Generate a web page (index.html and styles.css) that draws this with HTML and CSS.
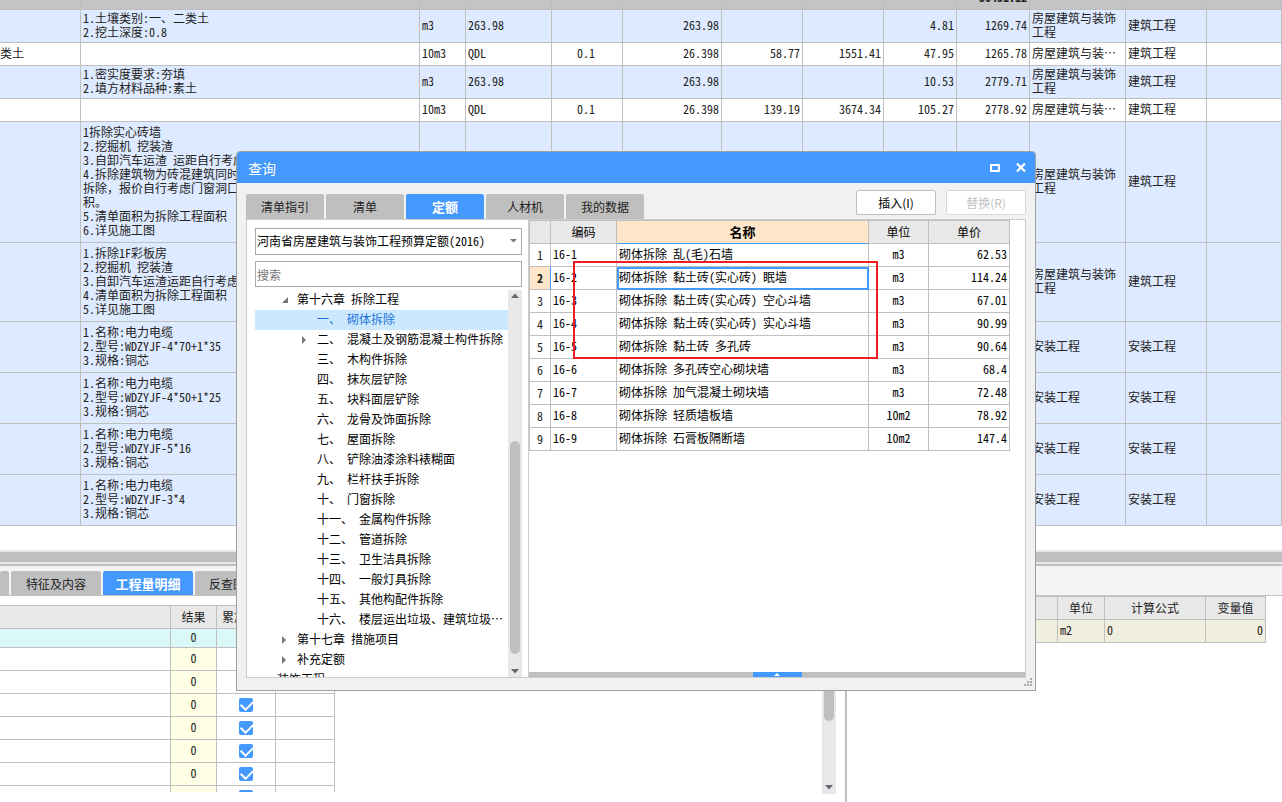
FILE: index.html
```html
<!DOCTYPE html>
<html lang="zh-CN">
<head>
<meta charset="utf-8">
<title>查询</title>
<link rel="stylesheet" href="styles.css">
</head>
<body>
<main class="workspace">
  <section class="bill">
    <table class="grid bill-table">
      <colgroup><col class="w81"><col class="w339"><col class="w46"><col class="w86"><col class="w71"><col class="w99"><col class="w81"><col class="w81"><col class="w73"><col class="w73"><col class="w96"><col class="w81"><col></colgroup>
      <thead>
        <tr><th></th><th></th><th></th><th></th><th></th><th></th><th></th><th></th><th></th><th><div class="total">30431.12</div></th><th></th><th></th><th></th></tr>
      </thead>
      <tbody>
        <tr class="item h33"><td></td><td>1.土壤类别:一、二类土<br>2.挖土深度:0.8</td><td>m3</td><td>263.98</td><td></td><td class="num">263.98</td><td></td><td></td><td class="num">4.81</td><td class="num">1269.74</td><td>房屋建筑与装饰<br>工程</td><td>建筑工程</td><td></td></tr>
        <tr class="h23"><td class="flush">类土</td><td></td><td>10m3</td><td>QDL</td><td class="mid">0.1</td><td class="num">26.398</td><td class="num">58.77</td><td class="num">1551.41</td><td class="num">47.95</td><td class="num">1265.78</td><td>房屋建筑与装…</td><td>建筑工程</td><td></td></tr>
        <tr class="item h33"><td></td><td>1.密实度要求:夯填<br>2.填方材料品种:素土</td><td>m3</td><td>263.98</td><td></td><td class="num">263.98</td><td></td><td></td><td class="num">10.53</td><td class="num">2779.71</td><td>房屋建筑与装饰<br>工程</td><td>建筑工程</td><td></td></tr>
        <tr class="h23"><td></td><td></td><td>10m3</td><td>QDL</td><td class="mid">0.1</td><td class="num">26.398</td><td class="num">139.19</td><td class="num">3674.34</td><td class="num">105.27</td><td class="num">2778.92</td><td>房屋建筑与装…</td><td>建筑工程</td><td></td></tr>
        <tr class="item h121"><td></td><td>1拆除实心砖墙<br>2.挖掘机 挖装渣<br>3.自卸汽车运渣 运距自行考虑<br>4.拆除建筑物为砖混建筑同时<br>拆除<span class="full">，</span>报价自行考虑门窗洞口<br>积。<br>5.清单面积为拆除工程面积<br>6.详见施工图</td><td></td><td></td><td></td><td></td><td></td><td></td><td></td><td></td><td>房屋建筑与装饰<br>工程</td><td>建筑工程</td><td></td></tr>
        <tr class="item h79"><td></td><td>1.拆除1F彩板房<br>2.挖掘机 挖装渣<br>3.自卸汽车运渣运距自行考虑<br>4.清单面积为拆除工程面积<br>5.详见施工图</td><td></td><td></td><td></td><td></td><td></td><td></td><td></td><td></td><td>房屋建筑与装饰<br>工程</td><td>建筑工程</td><td></td></tr>
        <tr class="item h51"><td></td><td>1.名称:电力电缆<br>2.型号:WDZYJF-4*70+1*35<br>3.规格:铜芯</td><td></td><td></td><td></td><td></td><td></td><td></td><td></td><td></td><td>安装工程</td><td>安装工程</td><td></td></tr>
        <tr class="item h51"><td></td><td>1.名称:电力电缆<br>2.型号:WDZYJF-4*50+1*25<br>3.规格:铜芯</td><td></td><td></td><td></td><td></td><td></td><td></td><td></td><td></td><td>安装工程</td><td>安装工程</td><td></td></tr>
        <tr class="item h51"><td></td><td>1.名称:电力电缆<br>2.型号:WDZYJF-5*16<br>3.规格:铜芯</td><td></td><td></td><td></td><td></td><td></td><td></td><td></td><td></td><td>安装工程</td><td>安装工程</td><td></td></tr>
        <tr class="item h51"><td></td><td>1.名称:电力电缆<br>2.型号:WDZYJF-3*4<br>3.规格:铜芯</td><td></td><td></td><td></td><td></td><td></td><td></td><td></td><td></td><td>安装工程</td><td>安装工程</td><td></td></tr>
      </tbody>
    </table>
  </section>
  <div class="split-h"></div>
  <section class="detail">
    <nav class="detail-tabs">
      <button class="tab stub" aria-label="上一页"></button>
      <button class="tab">特征及内容</button>
      <button class="tab active">工程量明细</button>
      <button class="tab fit">反查图形</button>
    </nav>
    <div class="panes">
      <div class="pane-left">
        <div class="quantity">
          <table class="grid boxed quantity-table">
            <colgroup><col class="w171"><col class="w46"><col class="w59"><col class="w59"></colgroup>
            <thead><tr class="h23"><th></th><th>结果</th><th>累加标识</th><th></th></tr></thead>
            <tbody>
              <tr class="sum h19"><td></td><td>0</td><td></td><td></td></tr>
              <tr class="h23"><td></td><td>0</td><td><input type="checkbox" aria-label="累加" checked></td><td></td></tr>
              <tr class="h23"><td></td><td>0</td><td><input type="checkbox" aria-label="累加" checked></td><td></td></tr>
              <tr class="h23"><td></td><td>0</td><td><input type="checkbox" aria-label="累加" checked></td><td></td></tr>
              <tr class="h23"><td></td><td>0</td><td><input type="checkbox" aria-label="累加" checked></td><td></td></tr>
              <tr class="h23"><td></td><td>0</td><td><input type="checkbox" aria-label="累加" checked></td><td></td></tr>
              <tr class="h23"><td></td><td>0</td><td><input type="checkbox" aria-label="累加" checked></td><td></td></tr>
              <tr class="h23"><td></td><td></td><td><input type="checkbox" aria-label="累加" checked></td><td></td></tr>
            </tbody>
          </table>
        </div>
        <div class="scrollbar pane-scroll">
          <div class="thumb"></div>
          <svg width="10" height="5" viewBox="0 0 10 5"><path d="M1 0h8L5 4.500z" fill="#666670"/></svg>
        </div>
      </div>
      <div class="pane-right">
        <table class="grid boxed variable-table">
          <colgroup><col class="w211"><col class="w47"><col class="w101"><col class="w60"></colgroup>
          <thead><tr class="h23"><th></th><th>单位</th><th>计算公式</th><th>变量值</th></tr></thead>
          <tbody><tr class="h23"><td></td><td>m2</td><td>0</td><td class="num">0</td></tr></tbody>
        </table>
      </div>
    </div>
  </section>
</main>

<div class="dialog" role="dialog" aria-labelledby="dialog-title">
  <header class="titlebar">
    <h1 id="dialog-title">查询</h1>
    <button aria-label="最大化"><svg width="12" height="10" viewBox="0 0 12 10"><path d="M2 2h8v6H2z" fill="none" stroke="#fff" stroke-width="2"/></svg></button>
    <button aria-label="关闭"><svg width="12" height="10" viewBox="0 0 12 10"><path d="M2 .5l8 8M10 .5l-8 8" fill="none" stroke="#fff" stroke-width="2.200"/></svg></button>
  </header>
  <div class="toolbar">
    <nav class="tabs">
      <button class="tab">清单指引</button>
      <button class="tab">清单</button>
      <button class="tab active">定额</button>
      <button class="tab">人材机</button>
      <button class="tab">我的数据</button>
    </nav>
    <div class="actions">
      <button class="action">插入(I)</button>
      <button class="action" disabled>替换(R)</button>
    </div>
  </div>
  <div class="body">
    <aside class="side">
      <div class="combo">
        <select aria-label="定额库"><option>河南省房屋建筑与装饰工程预算定额(2016)</option></select>
        <svg width="7" height="4" viewBox="0 0 7 4"><path d="M0 0h7L3.500 3.500z" fill="#777"/></svg>
      </div>
      <input class="search" type="text" placeholder="搜索" aria-label="搜索">
      <div class="tree-wrap">
        <ul class="tree">
          <li class="l2"><svg width="8" height="8" viewBox="0 0 8 8"><path d="M7 1v6H1z" fill="#777"/></svg>第十六章 拆除工程</li>
          <li class="l3 selected">一、 砌体拆除</li>
          <li class="l3"><svg width="8" height="8" viewBox="0 0 8 8"><path d="M1 0v8l4-4z" fill="#777"/></svg>二、 混凝土及钢筋混凝土构件拆除</li>
          <li class="l3">三、 木构件拆除</li>
          <li class="l3">四、 抹灰层铲除</li>
          <li class="l3">五、 块料面层铲除</li>
          <li class="l3">六、 龙骨及饰面拆除</li>
          <li class="l3">七、 屋面拆除</li>
          <li class="l3">八、 铲除油漆涂料裱糊面</li>
          <li class="l3">九、 栏杆扶手拆除</li>
          <li class="l3">十、 门窗拆除</li>
          <li class="l3">十一、 金属构件拆除</li>
          <li class="l3">十二、 管道拆除</li>
          <li class="l3">十三、 卫生洁具拆除</li>
          <li class="l3">十四、 一般灯具拆除</li>
          <li class="l3">十五、 其他构配件拆除</li>
          <li class="l3">十六、 楼层运出垃圾、建筑垃圾…</li>
          <li class="l2"><svg width="8" height="8" viewBox="0 0 8 8"><path d="M1 0v8l4-4z" fill="#777"/></svg>第十七章 措施项目</li>
          <li class="l2"><svg width="8" height="8" viewBox="0 0 8 8"><path d="M1 0v8l4-4z" fill="#777"/></svg>补充定额</li>
          <li class="l1">装饰工程</li>
        </ul>
        <div class="scrollbar tree-scroll">
          <svg width="10" height="5" viewBox="0 0 10 5"><path d="M1 5h8L5 .5z" fill="#666670"/></svg>
          <div class="thumb"></div>
          <svg width="10" height="5" viewBox="0 0 10 5"><path d="M1 0h8L5 4.500z" fill="#666670"/></svg>
        </div>
      </div>
    </aside>
    <section class="results">
      <table class="grid boxed quota">
        <colgroup><col class="w21"><col class="w66"><col class="w252"><col class="w60"><col class="w81"></colgroup>
        <thead><tr><th></th><th>编码</th><th class="current">名称</th><th>单位</th><th>单价</th></tr></thead>
        <tbody>
          <tr><th>1</th><td>16-1</td><td>砌体拆除 乱(毛)石墙</td><td>m3</td><td>62.53</td></tr>
          <tr class="picked"><th>2</th><td>16-2</td><td>砌体拆除 黏土砖(实心砖) 眠墙</td><td>m3</td><td>114.24</td></tr>
          <tr><th>3</th><td>16-3</td><td>砌体拆除 黏土砖(实心砖) 空心斗墙</td><td>m3</td><td>67.01</td></tr>
          <tr><th>4</th><td>16-4</td><td>砌体拆除 黏土砖(实心砖) 实心斗墙</td><td>m3</td><td>90.99</td></tr>
          <tr><th>5</th><td>16-5</td><td>砌体拆除 黏土砖 多孔砖</td><td>m3</td><td>90.64</td></tr>
          <tr><th>6</th><td>16-6</td><td>砌体拆除 多孔砖空心砌块墙</td><td>m3</td><td>68.4</td></tr>
          <tr><th>7</th><td>16-7</td><td>砌体拆除 加气混凝土砌块墙</td><td>m3</td><td>72.48</td></tr>
          <tr><th>8</th><td>16-8</td><td>砌体拆除 轻质墙板墙</td><td>10m2</td><td>78.92</td></tr>
          <tr><th>9</th><td>16-9</td><td>砌体拆除 石膏板隔断墙</td><td>10m2</td><td>147.4</td></tr>
        </tbody>
      </table>
      <div class="marker"></div>
      <div class="expander"><button aria-label="展开"><svg width="6" height="3" viewBox="0 0 6 3"><path d="M0 3h6L3 0z" fill="#fff"/></svg></button></div>
    </section>
  </div>
  <svg class="grip" width="8" height="8" viewBox="0 0 8 8" fill="#aaa"><path d="M6 0h2v2H6zM3 3h2v2H3zM6 3h2v2H6zM0 6h2v2H0zM3 6h2v2H3zM6 6h2v2H6z"/></svg>
</div>
</body>
</html>
```
FILE: styles.css
```css
* { box-sizing: border-box; }

html, body { height: 100%; margin: 0; }

body {
  overflow: hidden;
  background: #fff;
  color: #222;
  font: 12px/14px "Noto Sans CJK SC", sans-serif;
  font-feature-settings: "hwid";
}

button, input, select {
  margin: 0;
  padding: 0;
  border: 0;
  color: inherit;
  font: inherit;
  font-feature-settings: inherit;
}

svg { display: block; flex: none; }
.full { font-feature-settings: normal; }

/* shared grid tables */
.grid { table-layout: fixed; border-collapse: separate; border-spacing: 0; }
.grid th, .grid td {
  padding: 0 2px 2px;
  overflow: hidden;
  border: 0 solid #bfbfbf;
  border-width: 0 1px 1px 0;
  font-weight: 400;
  text-align: left;
  white-space: nowrap;
}
.grid thead th { padding: 0; background: #e8e8e8; text-align: center; }
.grid .num { text-align: right; }
.grid .mid { padding-left: 0; text-align: center; }
.grid .flush { padding-left: 0; }
.boxed { border-top: 1px solid #bfbfbf; }

.w21 { width: 21px; }
.w46 { width: 46px; }
.w47 { width: 47px; }
.w59 { width: 59px; }
.w60 { width: 60px; }
.w66 { width: 66px; }
.w71 { width: 71px; }
.w73 { width: 73px; }
.w81 { width: 81px; }
.w86 { width: 86px; }
.w96 { width: 96px; }
.w99 { width: 99px; }
.w101 { width: 101px; }
.w171 { width: 171px; }
.w211 { width: 211px; }
.w252 { width: 252px; }
.w339 { width: 339px; }

.h19 { height: 19px; }
.h23 { height: 23px; }
.h33 { height: 33px; }
.h51 { height: 51px; }
.h79 { height: 79px; }
.h121 { height: 121px; }

/* workspace */
.workspace { display: flex; flex-direction: column; height: 100%; }
.bill { flex: none; padding-bottom: 24px; }
.bill-table { width: 100%; }
.bill-table thead th { height: 10px; background: #c4c4c4; }
.total {
  display: flex;
  align-items: flex-end;
  justify-content: flex-end;
  height: 9px;
  padding: 0 2px 5px 0;
  overflow: hidden;
  font-weight: 700;
}
.item td { background: #deeaff; }
.split-h {
  flex: none;
  height: 16px;
  border-top: 2px solid #e8e8e8;
  border-bottom: 2px solid #bfbfbf;
  background: linear-gradient(#bfbfbf 10px, #e8e8e8 10px);
}

.detail { display: flex; flex: 1; flex-direction: column; min-height: 0; }
.detail-tabs {
  display: flex;
  flex: none;
  align-items: flex-end;
  gap: 2px;
  height: 30px;
  border-bottom: 1px solid #c4c4c4;
  background: #f4f4f4;
}
.tab {
  height: 25px;
  border-radius: 2px 2px 0 0;
  background: #bfbfbf;
}
.tab.active { background: #4499ff; color: #fff; font-size: 13px; font-weight: 700; }
.detail-tabs .tab { width: 90px; height: 24px; padding-top: 1px; }
.detail-tabs .stub { width: 9px; }
.detail-tabs .fit { width: auto; padding: 1px 14px 0; }

.panes { display: flex; flex: 1; min-height: 0; }
.pane-left {
  display: flex;
  flex: 0 0 847px;
  justify-content: space-between;
  padding: 9px 9px 0 0;
  border-right: 2px solid #bfbfbf;
}
.pane-right { flex: 1; }
.quantity { margin-bottom: 10px; overflow: hidden; }
.quantity-table { width: 335px; }
.quantity-table td { text-align: center; }
.quantity-table td:nth-child(2) { background: #ffffe6; }
.quantity-table td:nth-child(3) { padding: 0; }
.quantity-table .sum td { background: #daf8f8; }
.quantity-table input {
  display: block;
  width: 14px;
  height: 14px;
  margin: 0 auto;
  border-radius: 2px;
  background: #4499ff;
  appearance: none;
}
.quantity-table input::before {
  display: block;
  width: 10px;
  height: 6px;
  border: solid #fff;
  border-width: 0 0 2px 2px;
  content: "";
  transform: translate(2px, 2px) rotate(-45deg);
}
.variable-table { width: 419px; }
.variable-table td { background: #f0eedf; }

.scrollbar {
  display: flex;
  flex: none;
  flex-direction: column;
  align-items: center;
  justify-content: space-between;
  width: 14px;
  background: #e8e8e8;
}
.thumb { width: 10px; border-radius: 5px; background: #bfbfbf; }
.pane-scroll { margin-bottom: 8px; padding-bottom: 4px; }
.pane-scroll .thumb { height: 116px; }

/* query dialog */
.dialog {
  position: absolute;
  top: 151px;
  left: 236px;
  display: flex;
  flex-direction: column;
  width: 800px;
  height: 540px;
  border: 1px solid #a0a0a0;
  border-radius: 4px 4px 0 0;
  background: #f1f1f1;
  color: #000;
}
.titlebar {
  display: flex;
  flex: none;
  align-items: center;
  gap: 14px;
  height: 31px;
  padding: 0 8px 0 11px;
  border-radius: 3px 3px 0 0;
  background: #4499ff;
  color: #fff;
}
.titlebar h1 { flex: 1; margin: 0; font-size: 14px; font-weight: 400; line-height: 20px; }
.titlebar button { background: none; }
.toolbar {
  display: flex;
  flex: none;
  align-items: flex-end;
  justify-content: space-between;
  height: 36px;
  padding: 0 9px;
}
.tabs { display: flex; gap: 2px; color: #222; }
.tabs .tab { width: 78px; }
.actions { display: flex; gap: 10px; padding-bottom: 4px; }
.action {
  width: 80px;
  height: 25px;
  border: 1px solid #bfbfbf;
  border-radius: 2px;
  background: #fff;
  font-feature-settings: normal;
}
.action:disabled { border-color: #d8d8d8; color: #bfbfbf; }

.body {
  display: grid;
  flex: 1;
  grid-template-columns: 282px 1fr;
  min-height: 0;
  margin: 0 9px 12px;
  border: 1px solid #ccc;
  background: #fff;
}
.side {
  display: flex;
  flex-direction: column;
  min-height: 0;
  padding: 8px 6px 0 8px;
  border-right: 1px solid #ccc;
}
.combo { position: relative; margin-bottom: 6px; }
.combo select {
  display: block;
  width: 100%;
  height: 27px;
  padding: 0 1px 2px;
  border: 1px solid #aaa;
  border-radius: 0;
  background: #fff;
  appearance: none;
}
.combo svg { position: absolute; top: 11px; right: 5px; }
.search {
  height: 26px;
  flex: none;
  padding: 0 1px;
  border: 1px solid #aaa;
  background: #fff;
}
.search::placeholder { color: #777; }
.tree-wrap { display: flex; flex: 1; min-height: 0; margin-top: 3px; }
.tree {
  flex: 1;
  min-width: 0;
  margin: 0;
  padding: 0;
  overflow: hidden;
  list-style: none;
  line-height: 18px;
  white-space: nowrap;
}
.tree li { display: flex; align-items: center; height: 20px; padding-bottom: 2px; white-space: pre; }
.tree .l1 { padding-left: 22px; }
.tree .l2 { padding-left: 42px; }
.tree .l3 { padding-left: 62px; }
.tree svg { margin: 2px 8px 0 -16px; }
.tree .selected { background: #cce8ff; color: #1a73d9; }
.tree-scroll { padding: 3px 0; }
.tree-scroll .thumb { height: 213px; margin-top: 127px; }

.results { position: relative; display: flex; flex-direction: column; min-width: 0; }
.quota { width: 481px; border-left: 1px solid #bfbfbf; }
.quota tr { height: 23px; }
.quota th { color: #222; text-align: center; }
.quota tbody th { padding: 0; }
.quota thead th { color: #000; }
.quota thead .current {
  border-bottom-color: #4499ff;
  background: #ffe6c8;
  font-size: 13px;
  font-weight: 700;
}
.quota td:nth-child(4) { text-align: center; }
.quota td:nth-child(5) { text-align: right; }
.quota .picked th { border-right-color: #4499ff; background: #ffe6c8; font-weight: 700; }
.quota .picked td:nth-child(3) { outline: 2px solid #4499ff; outline-offset: -2px; }

/* highlight frame drawn over the rows */
.marker {
  position: absolute;
  top: 41px;
  left: 44px;
  width: 305px;
  height: 98px;
  border: 2px solid #ee1c25;
}
.expander { margin-top: auto; background: #bfbfbf; }
.expander button {
  display: flex;
  align-items: center;
  justify-content: center;
  width: 49px;
  height: 5px;
  margin: 0 auto;
  background: #4499ff;
}
.grip { position: absolute; right: 3px; bottom: 4px; }
```
